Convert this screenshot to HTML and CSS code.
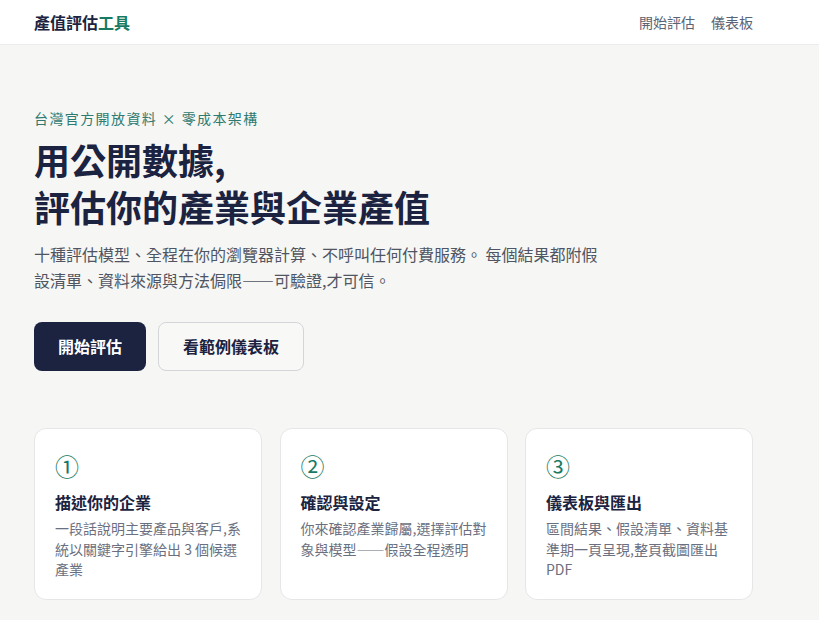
FILE: index.html
```html
<!DOCTYPE html>
<html lang="zh-Hant">
<head>
<meta charset="utf-8">
<title>產值評估工具</title>
<link rel="stylesheet" href="styles.css">
</head>
<body>
<header class="topbar">
  <div class="wrap topbar-inner">
    <a class="brand" href="#">產值評估<span class="brand-accent">工具</span></a>
    <nav class="topnav">
      <a href="#">開始評估</a>
      <a href="#">儀表板</a>
    </nav>
  </div>
</header>

<main class="wrap">
  <section class="hero">
    <p class="eyebrow">台灣官方開放資料 × 零成本架構</p>
    <h1 class="hero-title">用公開數據,<br>評估你的產業與企業產值</h1>
    <p class="hero-lead">十種評估模型、全程在你的瀏覽器計算、不呼叫任何付費服務。 每個結果都附假設清單、資料來源與方法侷限——可驗證,才可信。</p>
    <div class="hero-actions">
      <a class="btn btn-primary" href="#">開始評估</a>
      <a class="btn btn-outline" href="#">看範例儀表板</a>
    </div>
  </section>

  <section class="steps">
    <article class="step">
      <div class="step-num">①</div>
      <h2 class="step-title">描述你的企業</h2>
      <p class="step-text">一段話說明主要產品與客戶,系統以關鍵字引擎給出 3 個候選產業</p>
    </article>
    <article class="step">
      <div class="step-num">②</div>
      <h2 class="step-title">確認與設定</h2>
      <p class="step-text">你來確認產業歸屬,選擇評估對象與模型——假設全程透明</p>
    </article>
    <article class="step">
      <div class="step-num">③</div>
      <h2 class="step-title">儀表板與匯出</h2>
      <p class="step-text">區間結果、假設清單、資料基準期一頁呈現,整頁截圖匯出PDF</p>
    </article>
  </section>
</main>
</body>
</html>
```

FILE: styles.css
```css
* {
  box-sizing: border-box;
}

html, body {
  margin: 0;
  padding: 0;
}

body {
  background: #f6f6f4;
  color: #1b2340;
  font-family: "Noto Sans CJK TC", "Noto Sans", sans-serif;
}

a {
  text-decoration: none;
  color: inherit;
}

.wrap {
  width: 719px;
  margin-left: 34px;
}

/* top bar */
.topbar {
  background: #ffffff;
  border-bottom: 1px solid #ececea;
}

.topbar-inner {
  height: 44px;
  display: flex;
  align-items: center;
  justify-content: space-between;
}

.brand {
  font-size: 16px;
  font-weight: 700;
  color: #1b2340;
  line-height: 1;
}

.brand-accent {
  color: #177a62;
}

.topnav {
  display: flex;
  gap: 16px;
  font-size: 14px;
  color: #5b6476;
}

/* hero */
.hero {
  padding-top: 63px;
}

.eyebrow {
  margin: 0 0 7px;
  font-size: 14px;
  line-height: 21px;
  letter-spacing: 1.4px;
  color: #2e7a70;
}

.hero-title {
  margin: 0;
  font-size: 36px;
  line-height: 47px;
  font-weight: 700;
  color: #1b2340;
}

.hero-lead {
  margin: 11px 0 0;
  max-width: 576px;
  font-size: 16px;
  line-height: 26px;
  color: #4f5562;
}

.hero-actions {
  display: flex;
  gap: 12px;
  margin-top: 29px;
}

.btn {
  display: inline-block;
  padding: 12px 23px;
  font-size: 16px;
  line-height: 23px;
  font-weight: 700;
  border-radius: 8px;
  border: 1px solid transparent;
}

.btn-primary {
  background: #1b2340;
  color: #ffffff;
}

.btn-outline {
  padding: 12px 24px;
  background: #f8f8f7;
  color: #1b2340;
  border-color: #d3d5d9;
}

/* steps */
.steps {
  display: grid;
  grid-template-columns: repeat(3, 1fr);
  gap: 17.5px;
  margin-top: 57px;
}

.step {
  background: #ffffff;
  border: 1px solid #e6e6e6;
  border-radius: 12px;
  padding: 20px 16px 19px 20px;
}

.step-num {
  font-size: 24px;
  line-height: 33px;
  color: #177a62;
}

.step-title {
  margin: 8px 0 0;
  font-size: 16px;
  line-height: 24px;
  font-weight: 700;
  color: #1b2340;
}

.step-text {
  margin: 4px 0 0;
  font-size: 14px;
  line-height: 20.5px;
  color: #6b7080;
}
```
